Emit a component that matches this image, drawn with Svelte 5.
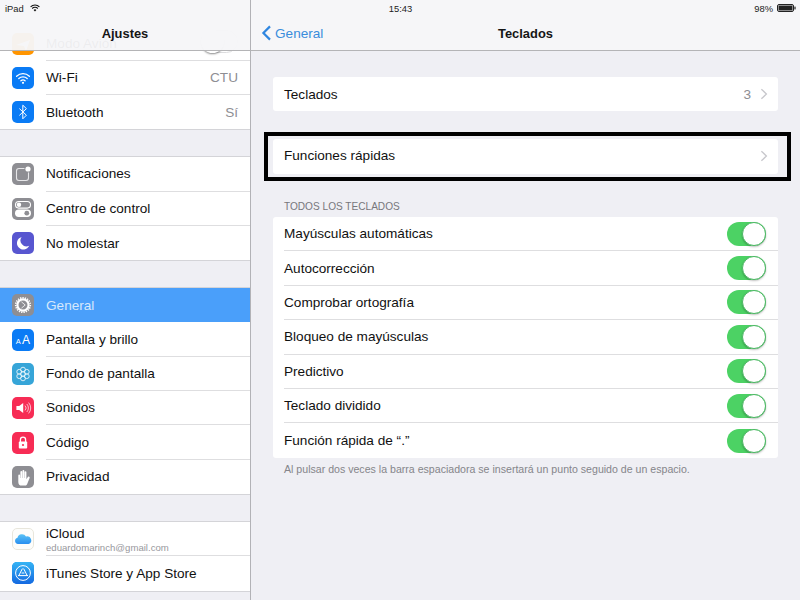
<script>
	const groups = [
		[
			{ icon: 'plane', label: 'Modo Avión', off: true },
			{ icon: 'wifi', label: 'Wi-Fi', value: 'CTU' },
			{ icon: 'bluetooth', label: 'Bluetooth', value: 'Sí' }
		],
		[
			{ icon: 'notify', label: 'Notificaciones' },
			{ icon: 'control', label: 'Centro de control' },
			{ icon: 'moon', label: 'No molestar' }
		],
		[
			{ icon: 'gear', label: 'General', active: true },
			{ icon: 'display', label: 'Pantalla y brillo' },
			{ icon: 'flower', label: 'Fondo de pantalla' },
			{ icon: 'sound', label: 'Sonidos' },
			{ icon: 'lock', label: 'Código' },
			{ icon: 'hand', label: 'Privacidad' }
		],
		[
			{ icon: 'cloud', label: 'iCloud', sub: 'eduardomarinch@gmail.com' },
			{ icon: 'store', label: 'iTunes Store y App Store' }
		]
	];

	const options = [
		'Mayúsculas automáticas',
		'Autocorrección',
		'Comprobar ortografía',
		'Bloqueo de mayúsculas',
		'Predictivo',
		'Teclado dividido',
		'Función rápida de “.”'
	];

	const tints = {
		plane: '#ff9500', wifi: '#0a7bf5', bluetooth: '#0a7bf5', notify: '#8e8e93', control: '#8e8e93',
		moon: '#5856d0', gear: '#8e8e93', display: '#0a7bf5', flower: '#36a5d8', sound: '#f72c55',
		lock: '#f72c55', hand: '#8e8e93', cloud: '#fdfdfb', store: '#1a86ee'
	};
</script>

{#snippet glyph(name)}
	<svg class="icon" width="22" height="22" viewBox="0 0 22 22">
		<rect width="22" height="22" rx="5" fill={tints[name]} />
		{#if name === 'plane'}
			<path d="M4 12l14-5-4 11-2-5z" fill="#fff" />
		{:else if name === 'wifi'}
			<path d="M4.6 9.2a9.4 9.4 0 0 1 12.8 0M6.8 11.6a6.2 6.2 0 0 1 8.4 0M8.9 13.8a3.1 3.1 0 0 1 4.2 0" fill="none" stroke="#fff" stroke-width="1.3" stroke-linecap="round" />
			<circle cx="11" cy="15.8" r="1.1" fill="#fff" />
		{:else if name === 'bluetooth'}
			<path d="M7.4 7.6l7 6.6-3.6 3.6V4.2l3.6 3.4-7 6.8" fill="none" stroke="#fff" stroke-width="1" stroke-linejoin="round" />
		{:else if name === 'notify'}
			<rect x="4.5" y="5.5" width="12" height="12" rx="2.5" fill="none" stroke="#e6e6e8" stroke-width="1.1" />
			<circle cx="16" cy="6" r="3.6" fill="#8e8e93" />
			<circle cx="16" cy="6" r="2.6" fill="#fff" />
		{:else if name === 'control'}
			<rect x="3.5" y="3.5" width="15" height="6.6" rx="3.3" fill="none" stroke="#fff" stroke-width="1.1" />
			<circle cx="7" cy="6.8" r="2.2" fill="#fff" />
			<rect x="3" y="11.5" width="16" height="7.4" rx="3.7" fill="#fff" />
			<circle cx="14.8" cy="15.2" r="2.4" fill="#8e8e93" />
		{:else if name === 'moon'}
			<path d="M9.6 5a6.4 6.4 0 1 0 7.6 8.8 6 6 0 0 1-7.6-8.8z" fill="#fff" />
		{:else if name === 'gear'}
			<circle cx="11" cy="11" r="5.6" fill="none" stroke="#fff" stroke-width="2.2" />
			<circle cx="11" cy="11" r="7.3" fill="none" stroke="#fff" stroke-width="1.6" stroke-dasharray="1.3 1.1" />
			<path d="M9.4 7.8l3.8 3.2-3.8 3.2" fill="none" stroke="#fff" stroke-width=".8" />
		{:else if name === 'display'}
			<text class="aa" x="3.8" y="14.6" font-size="7.5">A</text>
			<text class="aa" x="10" y="15.4" font-size="12">A</text>
		{:else if name === 'flower'}
			<g fill="none" stroke="#e6f5fb" stroke-width=".9">
				<circle cx="11" cy="6.6" r="2.4" /><circle cx="11" cy="15.4" r="2.4" />
				<circle cx="7.2" cy="8.8" r="2.4" /><circle cx="14.8" cy="8.8" r="2.4" />
				<circle cx="7.2" cy="13.2" r="2.4" /><circle cx="14.8" cy="13.2" r="2.4" />
				<circle cx="11" cy="11" r="2.4" />
			</g>
		{:else if name === 'sound'}
			<path d="M4.4 9h2.8l4-3v10l-4-3H4.4z" fill="#fff" />
			<path d="M13 8.6a3.4 3.4 0 0 1 0 4.8M14.8 7a5.8 5.8 0 0 1 0 8M16.6 5.6a8 8 0 0 1 0 10.8" fill="none" stroke="#fbd0da" stroke-width=".9" />
		{:else if name === 'lock'}
			<path d="M8.4 10V7.8a2.6 2.6 0 0 1 5.2 0V10" fill="none" stroke="#fff" stroke-width="1.3" />
			<rect x="6.8" y="9.6" width="8.4" height="7" rx="1" fill="#fff" />
			<circle cx="11" cy="13" r="1.1" fill="#f72c55" />
		{:else if name === 'hand'}
			<path d="M6.3 9.5a.9.9 0 0 1 1.8 0V12h.3V6a.9.9 0 0 1 1.8 0v6h.3V4.8a.9.9 0 0 1 1.8 0V12h.3V6.2a.9.9 0 0 1 1.8 0v7l1.6-2.4a1 1 0 0 1 1.6 1.1L15 18.4a3 3 0 0 1-2.4 1.2H10a3.6 3.6 0 0 1-3.7-3.6z" fill="#fff" />
		{:else if name === 'cloud'}
			<defs>
				<linearGradient id="cloudFill" x1="0" y1="0" x2="0" y2="1">
					<stop offset="0" stop-color="#5cc3f5" />
					<stop offset="1" stop-color="#2a8ff0" />
				</linearGradient>
			</defs>
			<rect x=".5" y=".5" width="21" height="21" rx="4.5" fill="none" stroke="#e8e6dc" />
			<path d="M6 16a3.2 3.2 0 0 1-.5-6.3A4.6 4.6 0 0 1 14 8.6a3.8 3.8 0 0 1 2.6 7.4z" fill="url(#cloudFill)" />
		{:else if name === 'store'}
			<defs>
				<linearGradient id="storeFill" x1="0" y1="0" x2="0" y2="1">
					<stop offset="0" stop-color="#34b4f4" />
					<stop offset="1" stop-color="#1468e0" />
				</linearGradient>
			</defs>
			<rect width="22" height="22" rx="5" fill="url(#storeFill)" />
			<circle cx="11" cy="11" r="7.4" fill="none" stroke="#fff" stroke-width="1" />
			<path d="M11.6 6.6l3.6 7M10.4 6.6l-3.6 7M6 13.6h10M9.6 11h2.8" fill="none" stroke="#fff" stroke-width="1" />
		{/if}
	</svg>
{/snippet}

{#snippet chevron()}
	<svg class="chevron" width="8" height="12" viewBox="0 0 8 12">
		<path d="M1.4 1.2L6.4 6l-5 4.8" fill="none" stroke="#c7c7cc" stroke-width="1.3" />
	</svg>
{/snippet}

<div class="ipad">
	<aside class="sidebar">
		<header class="bar sidebar-bar"><span class="bar-title">Ajustes</span></header>
		<div class="menu">
			{#each groups as group}
				<section class="group">
					{#each group as item}
						<div class="item" class:active={item.active}>
							{@render glyph(item.icon)}
							<div class="item-body">
								{#if item.sub}
									<div class="stack">
										<span>{item.label}</span>
										<small>{item.sub}</small>
									</div>
								{:else}
									<span>{item.label}</span>
								{/if}
								{#if item.value}<em>{item.value}</em>{/if}
								{#if item.off}<i class="switch-off"></i>{/if}
							</div>
						</div>
					{/each}
				</section>
			{/each}
		</div>
	</aside>

	<main class="detail">
		<header class="bar detail-bar">
			<span class="back">
				<svg width="11" height="16" viewBox="0 0 11 16">
					<path d="M9 1.4L2.4 8 9 14.6" fill="none" stroke="#2f86e0" stroke-width="2.2" />
				</svg>
				General
			</span>
			<span class="bar-title">Teclados</span>
		</header>

		<div class="card link first">
			<span>Teclados</span>
			<em>3</em>
			{@render chevron()}
		</div>

		<div class="card link shortcut">
			<span>Funciones rápidas</span>
			{@render chevron()}
		</div>

		<h2>TODOS LOS TECLADOS</h2>
		<div class="card options">
			{#each options as option}
				<div class="option">
					<span>{option}</span>
					<i class="switch-on"></i>
				</div>
			{/each}
		</div>
		<p class="note">Al pulsar dos veces la barra espaciadora se insertará un punto seguido de un espacio.</p>
	</main>

	<div class="status">
		<span class="status-left">
			iPad
			<svg width="10" height="8" viewBox="0 0 10 8">
				<path d="M.6 2.8a6.2 6.2 0 0 1 8.8 0M2.2 4.5a3.9 3.9 0 0 1 5.6 0" fill="none" stroke="#111" stroke-width="1.1" />
				<path d="M3.6 5.9a2 2 0 0 1 2.8 0L5 7.4z" fill="#111" />
			</svg>
		</span>
		<span>15:43</span>
		<span class="status-right">
			98%
			<svg width="19" height="8" viewBox="0 0 19 8">
				<rect x=".5" y=".5" width="16" height="7" rx="1.5" fill="none" stroke="#222" />
				<rect x="1.5" y="1.5" width="14" height="5" fill="#222" />
				<rect x="17.4" y="2.6" width="1.2" height="2.8" fill="#222" />
			</svg>
		</span>
	</div>
</div>

<style>
	:global(body) {
		margin: 0;
		background: #efeff4;
	}
	.ipad {
		position: relative;
		display: flex;
		width: 800px;
		height: 600px;
		overflow: hidden;
		background: #efeff4;
		color: #111;
		font-family: "Liberation Sans", Arial, sans-serif;
		font-size: 13.6px;
	}
	em {
		font-style: normal;
		color: #8e8e93;
	}

	/* bars */
	.bar {
		box-sizing: border-box;
		height: 51px;
		padding-top: 16px;
		display: flex;
		align-items: center;
		justify-content: center;
		border-bottom: 1px solid #b4b4b6;
	}
	.bar-title {
		font-weight: bold;
		font-size: 12.9px;
		color: #151515;
	}
	.status {
		position: absolute;
		top: 0;
		left: 0;
		right: 0;
		z-index: 2;
		height: 16px;
		padding: 0 4px 0 5px;
		display: grid;
		grid-template-columns: 1fr auto 1fr;
		align-items: center;
		font-size: 9.4px;
		color: #222;
	}
	.status-left {
		display: flex;
		align-items: center;
		gap: 6px;
	}
	.status-right {
		display: flex;
		align-items: center;
		justify-content: flex-end;
		gap: 4px;
	}

	/* sidebar */
	.sidebar {
		position: relative;
		flex: none;
		width: 250px;
		border-right: 1px solid #b2b2b6;
	}
	.sidebar-bar {
		position: absolute;
		top: 0;
		left: 0;
		right: 0;
		z-index: 1;
		background: rgba(246, 246, 248, 0.96);
	}
	.menu {
		display: flex;
		flex-direction: column;
		gap: 26px;
		padding-top: 26.4px;
	}
	.group {
		background: #fff;
		border-top: 1px solid #d4d4d8;
		border-bottom: 1px solid #d4d4d8;
	}
	.group:first-child {
		border-top: 0;
	}
	.item {
		display: flex;
		height: 34.3px;
	}
	.icon {
		flex: none;
		align-self: center;
		margin: 0 12px;
	}
	.item-body {
		flex: 1;
		min-width: 0;
		display: flex;
		align-items: center;
		justify-content: space-between;
		padding-right: 12px;
		border-bottom: 1px solid #dedee0;
	}
	.item:last-child .item-body {
		border-bottom: 0;
	}
	.item.active {
		background: #4a9ffa;
		color: #d6e8fc;
	}
	.item.active .item-body {
		border-bottom: 0;
	}
	.stack {
		display: flex;
		flex-direction: column;
		line-height: 14px;
		margin-top: 3px;
	}
	.stack small {
		font-size: 9.6px;
		line-height: 13px;
		color: #98989d;
	}
	.aa {
		fill: #fff;
		font-family: "Liberation Sans", Arial, sans-serif;
	}
	.switch-off {
		width: 37px;
		height: 23px;
		margin-top: -3px;
		box-sizing: border-box;
		border: 1px solid #dcdcde;
		border-radius: 12px;
		position: relative;
	}
	.switch-off::before {
		content: "";
		position: absolute;
		left: -1px;
		top: -1px;
		width: 23px;
		height: 23px;
		border-radius: 50%;
		background: #fff;
		box-shadow: 0 1px 2px rgba(0, 0, 0, 0.45);
	}

	/* detail pane */
	.detail {
		flex: 1;
		min-width: 0;
	}
	.detail-bar {
		position: relative;
		background: #f6f6f8;
	}
	.back {
		position: absolute;
		left: 10px;
		bottom: 9px;
		display: flex;
		align-items: center;
		gap: 3px;
		color: #3a8ddc;
	}
	.card {
		margin: 0 22px;
		background: #fff;
		border-radius: 3px;
	}
	.link {
		display: flex;
		align-items: center;
		height: 34px;
		padding: 0 10px 0 11px;
	}
	.link span {
		flex: 1;
	}
	.chevron {
		margin-left: 9px;
	}
	.first {
		margin-top: 26px;
	}
	.shortcut {
		position: relative;
		box-sizing: border-box;
		height: 35px;
		margin-top: 28px;
		padding-bottom: 2px;
	}
	.shortcut::after {
		content: "";
		position: absolute;
		inset: -7px -13px -7px -9px;
		border: 4px solid #000;
	}
	h2 {
		margin: 27px 22px 4px 33px;
		font-size: 10.1px;
		line-height: 12px;
		font-weight: normal;
		color: #77777c;
	}
	.option {
		display: flex;
		align-items: center;
		justify-content: space-between;
		box-sizing: border-box;
		height: 34.4px;
		margin-left: 11px;
		padding-right: 12px;
		border-bottom: 1px solid #dedee0;
	}
	.option:last-child {
		border-bottom: 0;
	}
	.switch-on {
		position: relative;
		width: 39px;
		height: 24px;
		border-radius: 12px;
		background: #4cd264;
	}
	.switch-on::before {
		content: "";
		position: absolute;
		right: 0;
		top: 0;
		box-sizing: border-box;
		width: 24px;
		height: 24px;
		border-radius: 50%;
		background: #fff;
		border: 1px solid #4cb864;
		box-shadow: 0 1px 2px rgba(0, 0, 0, 0.25);
	}
	.note {
		margin: 5px 22px 0 33px;
		font-size: 10.6px;
		line-height: 12px;
		color: #85858a;
	}
</style>
